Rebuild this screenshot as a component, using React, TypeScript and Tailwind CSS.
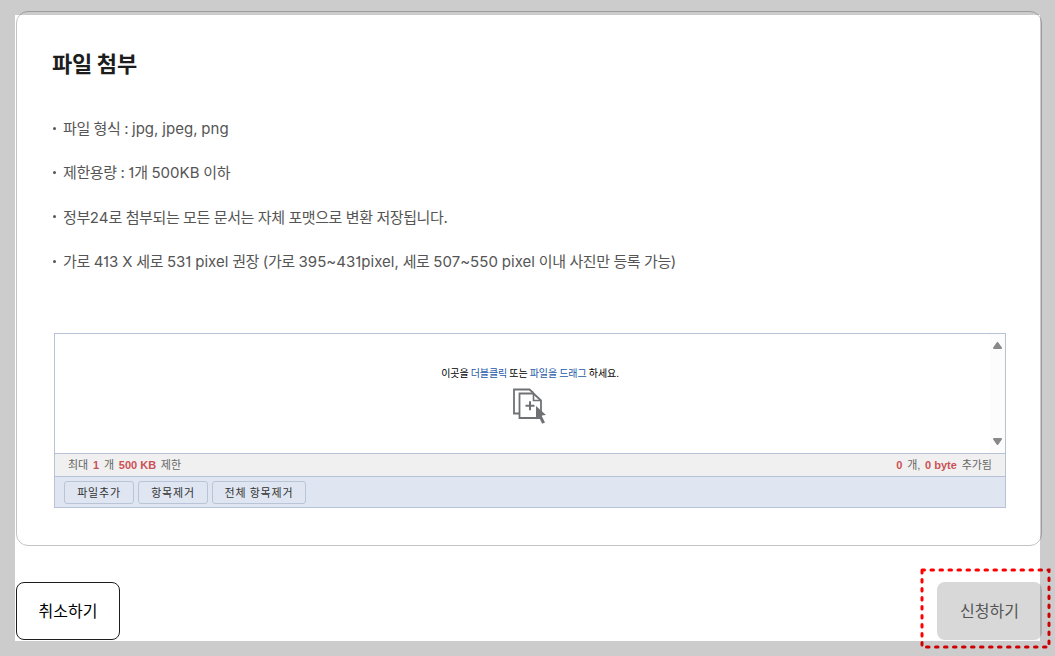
const notices = [
  "파일 형식 : jpg, jpeg, png",
  "제한용량 : 1개 500KB 이하",
  "정부24로 첨부되는 모든 문서는 자체 포맷으로 변환 저장됩니다.",
  "가로 413 X 세로 531 pixel 권장 (가로 395~431pixel, 세로 507~550 pixel 이내 사진만 등록 가능)",
];

// Hangul is set a little tighter than the latin letters and digits
function NoticeText({ text }: { text: string }) {
  const parts = text.split(/([A-Za-z0-9~,]+)/);
  return (
    <span className="whitespace-pre">
      {parts.map((part, i) => (
        <span key={i} className={i % 2 === 1 ? "tracking-[0.03px]" : "tracking-[-0.4px]"}>
          {part}
        </span>
      ))}
    </span>
  );
}

function AddFileIcon() {
  return (
    <svg width="36" height="38" viewBox="0 0 36 38" fill="none">
      <path d="M7 26.5H2V2.5h15.500l4 3.500" stroke="#6f7275" strokeWidth="1.8" />
      <path d="M7.500 6.500h14l7.500 7v17.500H7.500z" fill="#fff" stroke="#6f7275" strokeWidth="1.8" />
      <path d="M21.500 6.500v7H29" stroke="#6f7275" strokeWidth="1.6" />
      <path d="M18 14.200v9M13.500 18.700h9" stroke="#6f7275" strokeWidth="2" />
      <path d="M24 19l10 9-4.500.5 3.500 7-2.800 1.300-3.400-7-2.800 2.700z" fill="#6f7275" />
    </svg>
  );
}

function SmallButton({ label, width }: { label: string; width: string }) {
  return (
    <button
      className={`${width} h-[23px] rounded-[3px] border border-[#b8c5d6] text-[11px] leading-none tracking-[0.8px] text-[#333]`}
    >
      {label}
    </button>
  );
}

export default function App() {
  return (
    <div className="relative h-[656px] w-[1055px] overflow-hidden bg-white pt-[11px] pl-4 font-['Noto_Sans_CJK_KR',sans-serif]">
      <section className="h-[535px] w-[1026px] rounded-xl border border-[#c4c4c4] px-[35px] pt-[34px]">
        <h2 className="text-[22px] leading-8 font-bold tracking-[-0.2px] text-[#1d1d1d]">파일 첨부</h2>

        <ul className="mt-7 font-['Inter','Noto_Sans_CJK_KR',sans-serif] text-[15px] text-[#555] [font-feature-settings:'cv01']">
          {notices.map((notice) => (
            <li key={notice} className="flex h-[44.4px] items-center whitespace-nowrap">
              <span className="mr-[7px] ml-[1px] size-[3px] rounded-full bg-[#555]" />
              <span className="pt-0.5">
                <NoticeText text={notice} />
              </span>
            </li>
          ))}
        </ul>

        {/* Upload box */}
        <div className="mt-[49px] ml-[2px] w-[952px] border border-[#b8c2d6] text-[11px]">
          <div className="flex h-[119px]">
            <div className="flex flex-1 flex-col items-center pt-[31px] pl-[15px] text-[10px] leading-4 text-black">
              <p className="tracking-[-0.08px]">
                이곳을 <span className="text-[#1c58a8]">더블클릭</span> 또는{" "}
                <span className="text-[#1c58a8]">파일을 드래그</span> 하세요.
              </p>
              <div className="mt-[6px]">
                <AddFileIcon />
              </div>
            </div>
            <div className="flex w-[15px] flex-col items-center justify-between bg-[#fcfcfc] py-2">
              <svg width="9" height="7" viewBox="0 0 9 7">
                <path d="M4.5 1L8 6H1z" fill="#888" stroke="#888" strokeWidth="2" strokeLinejoin="round" />
              </svg>
              <svg width="9" height="7" viewBox="0 0 9 7">
                <path d="M4.5 6L8 1H1z" fill="#888" stroke="#888" strokeWidth="2" strokeLinejoin="round" />
              </svg>
            </div>
          </div>
          <div className="flex h-6 items-center justify-between border-y border-[#b8c2d6] bg-[#f0f0f0] px-[13px] pt-px font-['Liberation_Sans','Noto_Sans_CJK_KR',sans-serif] [word-spacing:1.7px] text-[#666]">
            <p>
              최대 <b className="text-[#cc5055]">1</b> 개{" "}
              <b className="[word-spacing:0px] text-[#cc5055]">500 KB</b> 제한
            </p>
            <p>
              <b className="text-[#cc5055]">0</b> 개,{" "}
              <b className="[word-spacing:0px] text-[#cc5055]">0 byte</b> 추가됨
            </p>
          </div>
          <div className="flex h-[30px] items-center gap-1 bg-[#dfe6f2] px-[9px] pt-px">
            <SmallButton label="파일추가" width="w-[70px]" />
            <SmallButton label="항목제거" width="w-[70px]" />
            <SmallButton label="전체 항목제거" width="w-[94px]" />
          </div>
        </div>
      </section>

      <div className="mt-9 flex w-[1026px] justify-between text-base">
        <button className="h-[58px] w-[104px] rounded-lg border border-[#1d1d1d] pb-0.5 text-black">
          취소하기
        </button>
        <button className="h-[58px] w-[105px] rounded-lg bg-[#d8d8d8] pb-0.5 text-[#555]">신청하기</button>
      </div>

      <svg className="absolute top-[566px] left-[918px]" width="136" height="86" fill="none">
        <rect
          x="4"
          y="4"
          width="127"
          height="77"
          stroke="#ff0000"
          strokeWidth="3"
          strokeDasharray="2.5 6.5"
          strokeLinecap="round"
        />
      </svg>

      {/* Dimmed area around the highlighted region */}
      <div className="pointer-events-none absolute top-[15px] left-[15px] h-[626px] w-[1025px] shadow-[0_0_0_100px_rgba(0,0,0,0.2)]" />
    </div>
  );
}
